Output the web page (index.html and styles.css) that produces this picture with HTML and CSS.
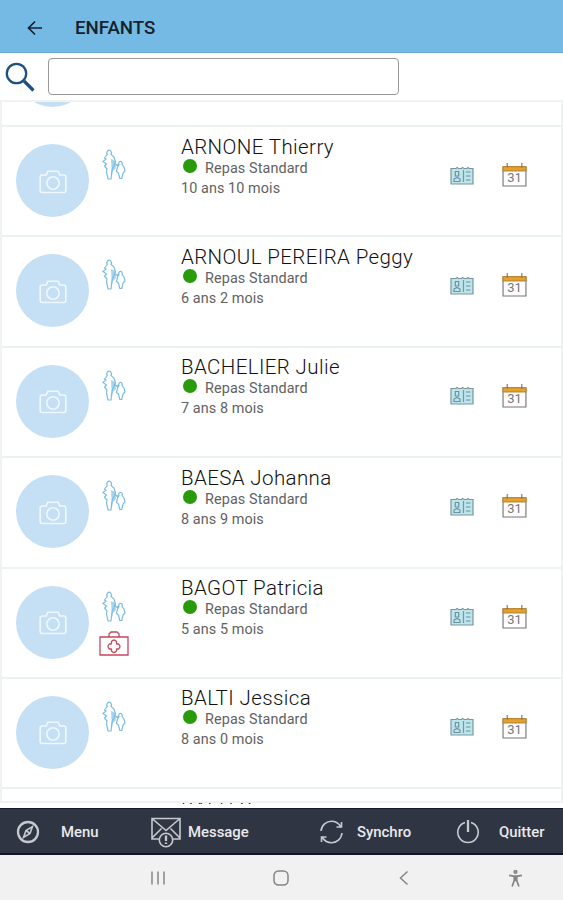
FILE: index.html
```html
<!DOCTYPE html>
<html lang="fr">
<head>
<meta charset="utf-8">
<title>Enfants</title>
<link rel="stylesheet" href="styles.css">
</head>
<body>
<svg class="defs" width="0" height="0" aria-hidden="true">
  <symbol id="camera" viewBox="0 0 28 24"><path d="M1.200 7q0-2 2-2h4l1.600-3.800h10.400l1.600 3.800h4q2 0 2 2v13.500q0 2-2 2H3.200q-2 0-2-2z"/><circle cx="14" cy="13" r="6.200"/></symbol>
  <symbol id="family" viewBox="0 0 24 32"><path class="tint" d="M9 10l4 2 1 7-3 3-1 5z"/><path d="M5.300 5.500a2.300 2.700 0 1 1 3.700 0l3 2.500 1.500 5-1.500 4-1.500 2-.8 4-.7 7H6l-1.500-7L5 20l-2.500-3 2-2L1 12.500 4 10l-1.500-1zM17 15.500a1.800 2 0 1 1 3 0l2 2.500 1 4-2 2-1.200 5.500h-2L16.500 24l-2-1.500 1-4.500zM12.500 14l2.500 2.500 2-2"/></symbol>
  <symbol id="card" viewBox="0 0 24 20"><path class="paper" d="M1 2.500h22V18H1z"/><path class="frame" d="M1 2.500h5l1-1 1.500 1h3l1-1 1.500 1h3l1-1 1 1H23V18H1zM13.500 4v12"/><path d="M16 6h4.500M16 10h4.500M16 14h4.500M4 15.500v-2.500l3-1.500 3 1.500v2.500zM5.300 5.500h3.400v4.500H5.300z"/></symbol>
  <symbol id="calendar" viewBox="0 0 24 24"><path class="sheet" d="M1 5h22v18H1z"/><path class="band" d="M1 4.500h22v4H1z"/><path d="M5 1v4.500M19 1v4.500"/><text x="12" y="19.500" text-anchor="middle">31</text></symbol>
</svg>
<header class="topbar">
  <svg class="back" viewBox="0 0 16 16"><path d="M15 8H1.500M8 1.500L1.500 8 8 14.500"/></svg>
  <h1>ENFANTS</h1>
</header>
<div class="search">
  <svg viewBox="0 0 30 30"><circle cx="11.500" cy="11.500" r="9.700"/><path class="handle" d="M19 19l9.500 9.500"/></svg>
  <input type="text" aria-label="Rechercher">
</div>
<main class="list"><ul class="rows" id="rows"></ul></main>
<nav class="actions">
  <a class="menu"><svg viewBox="0 0 24 24"><circle class="thick" cx="12" cy="12" r="10"/><path d="M16.500 6.500l-2.500 7-6.500 4 2.500-7zM10 10.500l4 3"/></svg><span>Menu</span></a>
  <a class="message"><svg viewBox="0 0 32 32"><path d="M9 23H2V2.500h28V23h-7M2 2.500l14 12 14-12M2 22l9.500-9.500M30 22l-9.500-9.500"/><circle cx="16" cy="24" r="6.700"/><path class="thick" d="M16 19.500v5.500M16 26.500v1.500"/></svg><span>Message</span></a>
  <a class="synchro"><svg viewBox="0 0 24 24"><path d="M1.500 11C2 5 7 1.200 12 1.200c4 0 7 2 9 5M22 2v5h-5M22.500 13c-.5 6-5.500 9.800-10.500 9.800-4 0-7-2-9-5M2 22v-5h5"/></svg><span>Synchro</span></a>
  <a class="quit"><svg viewBox="0 0 24 24"><path d="M9 2.500a10.200 10.200 0 1 0 6 0"/><path class="thick" d="M12 0v12"/></svg><span>Quitter</span></a>
</nav>
<footer class="system">
  <svg viewBox="0 0 16 16"><path d="M2 1.500v13M8 1.500v13M14 1.500v13"/></svg>
  <svg viewBox="0 0 16 16"><rect x="1" y="1" width="14" height="14" rx="4.500"/></svg>
  <svg viewBox="0 0 16 16"><path d="M11.500 1.500L4.500 8l7 6.500"/></svg>
  <svg class="person" viewBox="0 0 16 16"><circle cx="8" cy="1.800" r="1.200"/><path d="M2 5l4 .8h4l4-.8M8 5.500v5M6.800 6v4L4.800 15.500M9.200 6v4l2 5.500"/></svg>
</footer>
<script src="app.js"></script>
</body>
</html>
```
FILE: styles.css
```css
* { box-sizing: border-box; }
body { margin: 0; width: 563px; height: 900px; display: flex; flex-direction: column; overflow: hidden; background: #fff; font-family: Roboto, sans-serif; color: #222; }
svg { display: block; flex: none; fill: none; stroke: currentColor; }
.defs { width: 0; height: 0; position: absolute; }
.topbar { flex: none; height: 53px; padding: 3px 0 0 27px; display: flex; align-items: center; background: #75bae5; border-bottom: 1px solid #6aa9cf; color: #14222d; }
.back { width: 16px; height: 16px; stroke-width: 1.7; }
.topbar h1 { margin: 0 0 0 32px; font-size: 18.700px; font-weight: 500; line-height: 24px; }
.search { flex: none; height: 47px; padding: 5px 0 0 5px; display: flex; align-items: flex-start; }
.search svg { width: 30px; height: 30px; margin-top: 4px; color: #1d527f; stroke-width: 2.300; }
.search .handle { stroke-width: 3.200; }
.search input { width: 351px; height: 37px; margin-left: 13px; border: 1.500px solid #989898; border-radius: 4px; background: #fff; }
.list { position: relative; flex: none; height: 704px; overflow: hidden; }
.list::after { content: ""; position: absolute; inset: 0 0 1px; border: 2px solid #f0f2f2; pointer-events: none; }
.rows { margin: -85.400px 0 0; padding: 0; list-style: none; }
.row { height: 110.400px; padding: 0 36px 0 16px; display: flex; align-items: flex-start; border-top: 2px solid #ebf1f1; }
.avatar { width: 73px; height: 73px; margin-top: 17px; display: grid; place-items: center; border-radius: 50%; background: #c5dff5; color: #f0f8ff; }
.avatar svg { width: 28px; height: 24px; margin-top: 2px; stroke-width: 1.600; }
.tags { width: 48px; margin: 22px 0 0 9px; display: flex; flex-direction: column; gap: 9px; }
.family { width: 24px; height: 32px; margin-left: 4px; color: #7bbce2; stroke-width: 1.200; }
.tint { fill: #a5d4ee; stroke: none; }
.medical { width: 30px; height: 26px; margin: -1px 0 0 -1px; color: #c4485b; stroke-width: 1.300; }
.tags .medical { margin-left: 1px; }
.info { flex: 1; margin: 6.500px 0 0 35px; }
.name { margin: 0; font-size: 20.500px; line-height: 26px; font-weight: 300; letter-spacing: .39px; color: #111; white-space: nowrap; }
.meal, .age { margin: 0; font-size: 14.400px; letter-spacing: .1px; color: #626262; }
.meal { display: flex; line-height: 17px; }
.meal::before { content: ""; width: 14px; height: 14px; margin: -1px 8px 0 2px; border-radius: 50%; background: #299b0b; }
.age { margin-top: 1px; line-height: 21px; letter-spacing: .08px; }
.card { width: 24px; height: 20px; margin: 38.500px 28px 0 0; color: #6d929b; stroke-width: 1.200; }
.paper { fill: #bce5ee; stroke: none; }
.frame { stroke: #7a969c; }
.calendar { width: 25px; height: 25px; margin-top: 35px; color: #777; stroke-width: 1.100; }
.band { fill: #e6a02c; stroke: #bd8630; }
.sheet { fill: #fff; }
#calendar text { font: 12.500px Roboto, sans-serif; fill: #777; stroke: none; }
.actions { flex: none; height: 47px; margin-top: 4px; padding-top: 1px; display: flex; align-items: center; background: #2f3542; border-top: 1px solid #151a2c; border-bottom: 2px solid #12162b; color: #e9e9ed; }
.actions a { display: flex; align-items: center; }
.actions svg { stroke-width: 1.600; color: #c7c9cf; }
.actions .thick { stroke-width: 2.300; }
.actions span { font-size: 14.900px; font-weight: 500; line-height: 20px; }
.menu { width: 150px; padding-left: 16px; }
.menu svg { width: 24px; height: 24px; margin-right: 21px; }
.message { width: 169px; }
.message svg { width: 32px; height: 32px; margin-right: 6px; }
.synchro { width: 137px; }
.synchro svg { width: 25px; height: 24px; margin-right: 13px; }
.quit svg { width: 24px; height: 24px; margin-right: 19px; }
.system { flex: 1; padding-left: 149px; display: flex; align-items: center; background: #f1f1f1; color: #858585; }
.system svg { width: 18px; height: 16px; margin: 1px 105px 0 0; stroke-width: 1.500; }
.system svg:nth-child(3) { margin-right: 94px; }
.system .person { width: 17px; height: 17px; margin-right: 0; stroke-width: 1.600; }
```
FILE: app.js
```js
const children = [
  {},
  { name: "ARNONE Thierry", age: "10 ans 10 mois" },
  { name: "ARNOUL PEREIRA Peggy", age: "6 ans 2 mois" },
  { name: "BACHELIER Julie", age: "7 ans 8 mois" },
  { name: "BAESA Johanna", age: "8 ans 9 mois" },
  { name: "BAGOT Patricia", age: "5 ans 5 mois", medical: true },
  { name: "BALTI Jessica", age: "8 ans 0 mois" },
  { name: "BALTI Sonia" }
];
const medical = '<svg class="medical" viewBox="0 0 30 26"><path d="M1 6h28v18H1zM10 6V3l2-2h6l2 2v3M12.500 10.500q2.500-3 5 0v2q0 .5.500.5h1.500q3 2.500 0 5H18q-.5 0-.5.500v1.500q-2.500 3-5 0v-1.500q0-.5-.5-.5h-1.500q-3-2.500 0-5H12q.5 0 .5-.5z"/></svg>';
document.getElementById("rows").innerHTML = children.map(c => `
  <li class="row">
    <div class="avatar"><svg><use href="#camera"/></svg></div>
    <div class="tags"><svg class="family"><use href="#family"/></svg>${c.medical ? medical : ""}</div>
    <div class="info">${c.name ? `<h2 class="name">${c.name}</h2>` : ""}${c.age ? `<p class="meal">Repas Standard</p><p class="age">${c.age}</p>` : ""}</div>
    <svg class="card"><use href="#card"/></svg>
    <svg class="calendar"><use href="#calendar"/></svg>
  </li>`).join("");
```
